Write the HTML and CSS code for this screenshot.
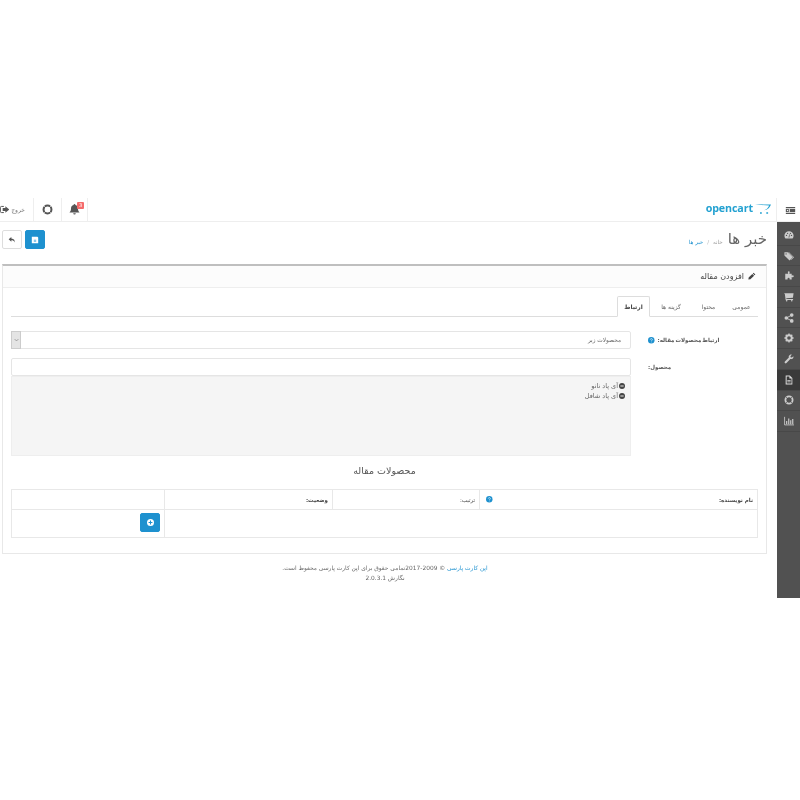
FILE: index.html
```html
<!DOCTYPE html>
<html lang="fa" dir="rtl">
<head>
<meta charset="utf-8">
<title>افزودن مقاله</title>
<link rel="stylesheet" href="styles.css">
</head>
<body>
<div class="app">
  <header class="topbar">
    <div class="menu-btn">
      <svg class="ico-menu" viewBox="0 0 12 9"><path d="M0 0h12v1.600H0zM0 7.400h12V9H0zM5 2.700h7v3.600H5zM0 2.700h4v3.600H0z" fill="#555"/><path d="M1 4.500l2-1.400v2.800z" fill="#fff"/></svg>
    </div>
    <div class="logo">
      <svg class="cart" viewBox="0 0 16 10"><path d="M0 0c5 .5 10 .6 16 .4-.8 1.800-1.700 3.300-3 4.400-.9.700-2.200 1.200-3.800 1.500 1.600-.7 2.700-1.400 3.400-2.300.7-.9 1.200-1.800 1.500-2.500C9.500 1.500 4.500 1 0 0z" fill="#23a1d1"/><path d="M5 8.200h1.800v1.500H5zM11.300 8.200h1.800v1.500h-1.800z" fill="#23a1d1"/></svg>
      <span class="logo-text" dir="ltr">opencart</span>
    </div>
    <nav class="top-nav">
      <div class="nav-item nav-bell">
        <svg class="ico-11" viewBox="0 0 12 12"><path d="M6 0a1 1 0 0 1 1 1c2 .4 2.800 2 2.800 4 0 2.400.8 3.400 1.700 4.300H.5C1.400 8.400 2.200 7.400 2.200 5c0-2 .8-3.600 2.800-4a1 1 0 0 1 1-1zM4.600 10h2.800a1.400 1.400 0 0 1-2.800 0z" fill="#555"/></svg>
        <span class="badge">3</span>
      </div>
      <div class="nav-item nav-help">
        <svg class="ico-11" viewBox="0 0 12 12"><circle cx="6" cy="6" r="4.300" fill="none" stroke="#555" stroke-width="2.200"/><path d="M2.500 2.500l1.800 1.800M9.500 2.500L7.700 4.300M2.500 9.500l1.800-1.800M9.500 9.500L7.700 7.700" stroke="#fff" stroke-width=".9"/></svg>
      </div>
      <div class="nav-item nav-logout">
        <span class="logout-text">خروج</span>
        <svg class="ico-10" viewBox="0 0 12 10"><path d="M5 1H2a1.500 1.500 0 0 0-1.500 1.500v5A1.500 1.500 0 0 0 2 9h3" fill="none" stroke="#555" stroke-width="1.300"/><path d="M7 0.800L12 5 7 9.200V6.800H3.500V3.200H7z" fill="#555"/></svg>
      </div>
    </nav>
  </header>

  <div class="body-row">
    <aside class="sidebar">
      <div class="side-item"><svg viewBox="0 0 12 12"><path d="M6 1.500a5.500 5.500 0 0 0-5.500 5.500c0 1.300.4 2.400 1.200 3.300h8.600c.8-.9 1.200-2 1.200-3.300A5.500 5.500 0 0 0 6 1.500z" fill="#ccc"/><circle cx="3" cy="6.500" r=".8" fill="#515151"/><circle cx="4.300" cy="4" r=".8" fill="#515151"/><circle cx="7.700" cy="4" r=".8" fill="#515151"/><circle cx="9" cy="6.500" r=".8" fill="#515151"/><path d="M5.400 9l1-4 .6.2-.6 3.800z" fill="#515151"/></svg></div>
      <div class="side-item"><svg viewBox="0 0 12 12"><path d="M.5 1.500h4l6 6-3.800 3.800-6.200-6z" fill="#ccc"/><path d="M6 1.500l6 6-3 3-.8-.1 2.800-2.900-6-6z" fill="#ccc"/><circle cx="2.500" cy="3.500" r=".8" fill="#515151"/></svg></div>
      <div class="side-item"><svg viewBox="0 0 12 12"><path d="M4.500 1.200a1.300 1.300 0 0 1 2.400 0c0 .6-.4.900-.4 1.400v.6h2.700v2.300c.5 0 .8-.4 1.300-.4a1.200 1.200 0 0 1 0 2.400c-.5 0-.8-.4-1.300-.4v3.200H6.700v-1.100a1.200 1.200 0 0 0-2.400 0v1.100H1.500V3.200h3.400v-.6c0-.5-.4-.8-.4-1.400z" fill="#ccc"/></svg></div>
      <div class="side-item"><svg viewBox="0 0 12 12"><path d="M.5 1.500h11l-.8 5.300-8 .8.200.9h8v1H2L1 2.500H.5z" fill="#ccc"/><circle cx="3.200" cy="10.500" r="1" fill="#ccc"/><circle cx="9.300" cy="10.500" r="1" fill="#ccc"/></svg></div>
      <div class="side-item"><svg viewBox="0 0 12 12"><circle cx="2.800" cy="6" r="2.200" fill="#ccc"/><circle cx="9.300" cy="2.500" r="2.200" fill="#ccc"/><circle cx="9.300" cy="9.500" r="2.200" fill="#ccc"/><path d="M2.800 6l6.500-3.500M2.800 6l6.500 3.500" stroke="#ccc" stroke-width="1.100"/></svg></div>
      <div class="side-item"><svg viewBox="0 0 12 12"><circle cx="6" cy="6" r="3.300" fill="none" stroke="#ccc" stroke-width="2.200"/><path d="M6 .5v2M6 9.500v2M.5 6h2M9.500 6h2M2.100 2.100l1.400 1.400M8.500 8.500l1.400 1.400M2.100 9.900l1.400-1.400M8.500 3.500l1.400-1.400" stroke="#ccc" stroke-width="1.600"/></svg></div>
      <div class="side-item"><svg viewBox="0 0 12 12"><path d="M11.300 2.600c.3 1.600-.3 3-2 3.500-.7.200-1.200.1-1.700 0L3 10.800a1.300 1.300 0 0 1-1.900-1.900l4.700-4.600c-.2-.6-.2-1.200 0-1.800C6.400 1 8 .3 9.500.7L7.700 2.600l.3 1.400 1.400.3z" fill="#ccc"/></svg></div>
      <div class="side-item is-active"><svg viewBox="0 0 12 12"><path d="M2 .5h5l3 3v8H2z" fill="#ddd"/><path d="M3.200 1.700h3.300v2.500H9v6.100H3.200z" fill="#3a3a3a"/><path d="M4 6h4v.9H4zM4 7.900h4v.9H4z" fill="#ddd"/></svg></div>
      <div class="side-item"><svg viewBox="0 0 12 12"><circle cx="6" cy="6" r="4.300" fill="none" stroke="#ccc" stroke-width="2.200"/><path d="M2.500 2.500l1.800 1.800M9.500 2.500L7.700 4.300M2.500 9.500l1.800-1.800M9.500 9.500L7.700 7.700" stroke="#515151" stroke-width=".9"/></svg></div>
      <div class="side-item"><svg viewBox="0 0 12 12"><path d="M.7 1v9.700H12" fill="none" stroke="#ccc"/><path d="M2.500 6h1.400v4H2.500zM5 3h1.400v7H5zM7.400 5h1.400v5H7.400zM9.800 3.500h1.400V10H9.800z" fill="#ccc"/></svg></div>
    </aside>

    <main class="content">
      <div class="page-head">
        <div class="titles">
          <h1 class="page-title">خبر ها</h1>
          <ul class="crumbs"><li class="crumb-home">خانه</li><li class="crumb-sep">/</li><li class="crumb-link">خبر ها</li></ul>
        </div>
        <div class="actions">
          <button class="btn btn-primary" type="button"><svg class="ico-btn" viewBox="0 0 10 10"><path d="M1 1h7l1 1v7H1z" fill="#fff"/><path d="M3.500 4.500h3v3h-3z" fill="#8cc7e8"/></svg></button>
          <button class="btn btn-default" type="button"><svg class="ico-btn" viewBox="0 0 10 10"><path d="M4.200 1.200L.8 4.200l3.400 3V5.400c2 0 3.300.4 4 2.800.6-2.800-.6-5-4-5.200z" fill="#555"/></svg></button>
        </div>
      </div>

      <section class="panel">
        <div class="panel-heading">
          <svg class="ico-pencil" viewBox="0 0 10 10"><path d="M7 .8l2.200 2.200-1 1L6 1.800zM5.400 2.400L7.600 4.600 3 9.200.5 9.500.8 7z" fill="#444"/></svg>
          <span>افزودن مقاله</span>
        </div>
        <div class="panel-body">
          <ul class="tabs">
            <li class="tab">عمومی</li>
            <li class="tab">محتوا</li>
            <li class="tab tab-wide">گزینه ها</li>
            <li class="tab is-active">ارتباط</li>
          </ul>

          <div class="form-row row-one">
            <label class="form-label label-long">ارتباط محصولات مقاله: <svg class="ico-help" viewBox="0 0 10 10"><circle cx="5" cy="5" r="5" fill="#1e91cf"/><path d="M3.500 4c0-2 3.200-2 3.200-.2 0 1.200-1.300 1.100-1.300 2.200" fill="none" stroke="#fff" stroke-width="1"/><circle cx="5.400" cy="7.500" r=".7" fill="#fff"/></svg></label>
            <div class="select-box"><span class="select-text">محصولات زیر</span><span class="select-arrow"><svg viewBox="0 0 8 6"><path d="M1 1.500l3 3 3-3" fill="none" stroke="#777" stroke-width="1"/></svg></span></div>
          </div>

          <div class="form-row">
            <label class="form-label">محصول:</label>
            <div class="field-stack">
              <div class="text-input"></div>
              <div class="well">
                <div class="well-item"><svg class="ico-minus" viewBox="0 0 8 8"><circle cx="4" cy="4" r="4" fill="#444"/><path d="M1.800 3.400h4.400v1.200H1.800z" fill="#fff"/></svg>آی پاد نانو</div>
                <div class="well-item"><svg class="ico-minus" viewBox="0 0 8 8"><circle cx="4" cy="4" r="4" fill="#444"/><path d="M1.800 3.400h4.400v1.200H1.800z" fill="#fff"/></svg>آی پاد شافل</div>
              </div>
            </div>
          </div>

          <h3 class="section-title">محصولات مقاله</h3>

          <div class="table">
            <div class="cell th c-name"><span>نام نویسنده:</span><svg class="ico-help" viewBox="0 0 10 10"><circle cx="5" cy="5" r="5" fill="#1e91cf"/><path d="M3.500 4c0-2 3.200-2 3.200-.2 0 1.200-1.300 1.100-1.300 2.200" fill="none" stroke="#fff" stroke-width="1"/><circle cx="5.400" cy="7.500" r=".7" fill="#fff"/></svg></div>
            <div class="cell th c-order">ترتیب:</div>
            <div class="cell th c-status">وضعیت:</div>
            <div class="cell th"></div>
            <div class="cell td span-3"></div>
            <div class="cell td add-cell"><button class="btn btn-primary" type="button"><svg class="ico-plus" viewBox="0 0 8 8"><circle cx="4" cy="4" r="4" fill="#fff"/><path d="M3.400 1.800h1.200v1.600h1.600v1.200H4.600v1.600H3.400V4.600H1.800V3.400h1.600z" fill="#1e91cf"/></svg></button></div>
          </div>
        </div>
      </section>

      <footer class="footer">
        <div><a class="foot-link">اپن کارت پارسی</a> © 2009-2017تمامی حقوق برای اپن کارت پارسی محفوظ است.</div>
        <div>نگارش 2.0.3.1</div>
      </footer>
    </main>
  </div>
</div>
</body>
</html>
```

FILE: styles.css
```css
* { box-sizing: border-box; }
html, body { margin: 0; padding: 0; background: #fff; }
body { font-family: "DejaVu Sans", "Noto Sans", sans-serif; font-size: 6.500px; color: #666; height: 800px; overflow: hidden; }
.app { margin-top: 198px; height: 400px; display: flex; flex-direction: column; will-change: transform; }

.topbar { height: 24px; flex: none; display: flex; align-items: stretch; border-bottom: 1px solid #eee; }
.menu-btn { width: 24px; flex: none; display: flex; align-items: center; justify-content: center; padding-left: 3px; border-left: 1px solid #eee; }
.ico-menu { width: 11px; height: 7px; margin-top: 1px; }
.logo { display: flex; align-items: center; gap: 2px; margin-right: 5px; padding-bottom: 1px; }
.cart { width: 16px; height: 10px; margin-bottom: 1px; }
.logo-text { font-family: "Open Sans", sans-serif; font-weight: 700; font-size: 10.700px; color: #23a1d1; line-height: 1; letter-spacing: -.1px; padding-bottom: 2px; }
.top-nav { margin-right: auto; display: flex; align-items: stretch; }
.nav-item { position: relative; display: flex; align-items: center; justify-content: center; border-right: 1px solid #eee; }
.nav-bell { width: 26px; }
.nav-help { width: 28px; }
.nav-logout { width: 34px; gap: 2px; justify-content: flex-start; padding-right: 8px; }
.logout-text { font-size: 6px; color: #777; }
.ico-11 { width: 11px; height: 11px; }
.ico-10 { width: 10px; height: 9px; }
.badge { position: absolute; top: 4px; right: 3px; min-width: 7px; height: 7px; background: #f56b6b; color: #fff; font-size: 5px; line-height: 7px; text-align: center; border-radius: 1px; }

.body-row { flex: 1; display: flex; min-height: 0; }
.sidebar { width: 23px; flex: none; background: #515151; padding-top: 3px; display: flex; flex-direction: column; }
.side-item { height: 20.700px; flex: none; display: flex; align-items: center; justify-content: center; border-bottom: 1px solid #484848; }
.side-item svg { width: 10px; height: 10px; }
.side-item.is-active { background: #3a3a3a; }

.content { width: 777px; flex: none; display: flex; flex-direction: column; }
.page-head { height: 42px; flex: none; display: flex; justify-content: space-between; padding: 8px 10px 0 2px; }
.titles { display: flex; align-items: center; height: 19px; gap: 5px; }
.page-title { margin: 0; font-size: 15px; font-weight: 400; color: #666; line-height: 19px; }
.crumbs { list-style: none; margin: 5px 0 0; padding: 0; display: flex; gap: 4px; font-size: 5.500px; }
.crumb-home { color: #999; }
.crumb-sep { color: #bbb; }
.crumb-link { color: #1e91cf; }
.actions { display: flex; gap: 3px; }
.btn { width: 20px; height: 19px; padding: 0; border-radius: 2px; display: flex; align-items: center; justify-content: center; }
.btn-primary { background: #1e91cf; border: 1px solid #1e91cf; }
.btn-default { background: #fff; border: 1px solid #ddd; }
.ico-btn { width: 8px; height: 8px; }
.ico-plus { width: 7px; height: 7px; }

.panel { margin: 0 10px 0 2px; height: 290px; flex: none; border: 1px solid #e8e8e8; border-top: 2px solid #bfbfbf; }
.panel-heading { height: 22px; background: #fcfcfc; border-bottom: 1px solid #eee; display: flex; align-items: center; gap: 4px; padding: 0 10px 1px 0; font-size: 8px; color: #444; }
.ico-pencil { width: 8px; height: 8px; }
.panel-body { padding: 8px 8px 0; }
.tabs { list-style: none; margin: 0; padding: 0; height: 21px; display: flex; border-bottom: 1px solid #ddd; }
.tab { width: 33px; height: 21px; display: flex; align-items: center; justify-content: center; font-size: 6px; color: #666; }
.tab-wide { width: 42px; }
.tab.is-active { background: #fff; border: 1px solid #ddd; border-bottom-color: #fff; font-weight: 700; color: #444; border-radius: 2px 2px 0 0; }

.form-row { display: flex; gap: 17px; }
.row-one { margin-top: 14px; margin-bottom: 9px; }
.form-label { width: 110px; flex: none; font-size: 5.500px; font-weight: 700; color: #555; padding-top: 5px; white-space: nowrap; display: flex; justify-content: flex-end; align-items: flex-start; gap: 3px; line-height: 9px; }
.label-long { word-spacing: -1px; }
.ico-help { width: 6.500px; height: 6.500px; flex: none; margin-top: 1px; }
.select-box { width: 620px; height: 18px; border: 1px solid #e5e5e5; border-radius: 2px; background: #fff; display: flex; justify-content: space-between; align-items: center; padding-right: 9px; }
.select-text { font-size: 5.800px; color: #666; }
.select-arrow { width: 10px; height: 18px; margin-left: -1px; background: #e4e4e4; border: 1px solid #ccc; display: flex; align-items: center; justify-content: center; }
.select-arrow svg { width: 5px; height: 4px; }
.field-stack { width: 620px; }
.text-input { height: 18px; border: 1px solid #e5e5e5; border-radius: 2px; background: #fff; }
.well { height: 80px; background: #f5f5f5; border: 1px solid #eee; padding: 4px 5px; }
.well-item { display: flex; align-items: center; gap: 1px; height: 10px; font-size: 6.500px; color: #666; }
.ico-minus { width: 6px; height: 6px; }
.section-title { margin: 9px 0 0; height: 24px; line-height: 12px; font-size: 9.500px; font-weight: 400; color: #555; text-align: center; }
.table { display: grid; grid-template-columns: 279px 147px 168px 153px; grid-template-rows: 20px 27px; border-top: 1px solid #e8e8e8; border-bottom: 1px solid #e8e8e8; }
.cell { border-bottom: 1px solid #e8e8e8; border-left: 1px solid #e8e8e8; }
.c-name, .span-3 { border-right: 1px solid #e8e8e8; }
.th { display: flex; align-items: center; padding: 0 4px; font-size: 5.500px; color: #444; }
.c-name { justify-content: space-between; padding-left: 6px; font-weight: 700; }
.c-name .ico-help { margin-top: 0; }
.c-status { font-weight: 700; }
.td { border-bottom: 0; }
.span-3 { grid-column: span 3; }
.add-cell { padding: 3px 4px 0 0; }

.footer { margin-top: 9px; width: 770px; align-self: flex-end; text-align: center; font-size: 5.900px; line-height: 10px; color: #666; }
.foot-link { color: #1e91cf; }
```
